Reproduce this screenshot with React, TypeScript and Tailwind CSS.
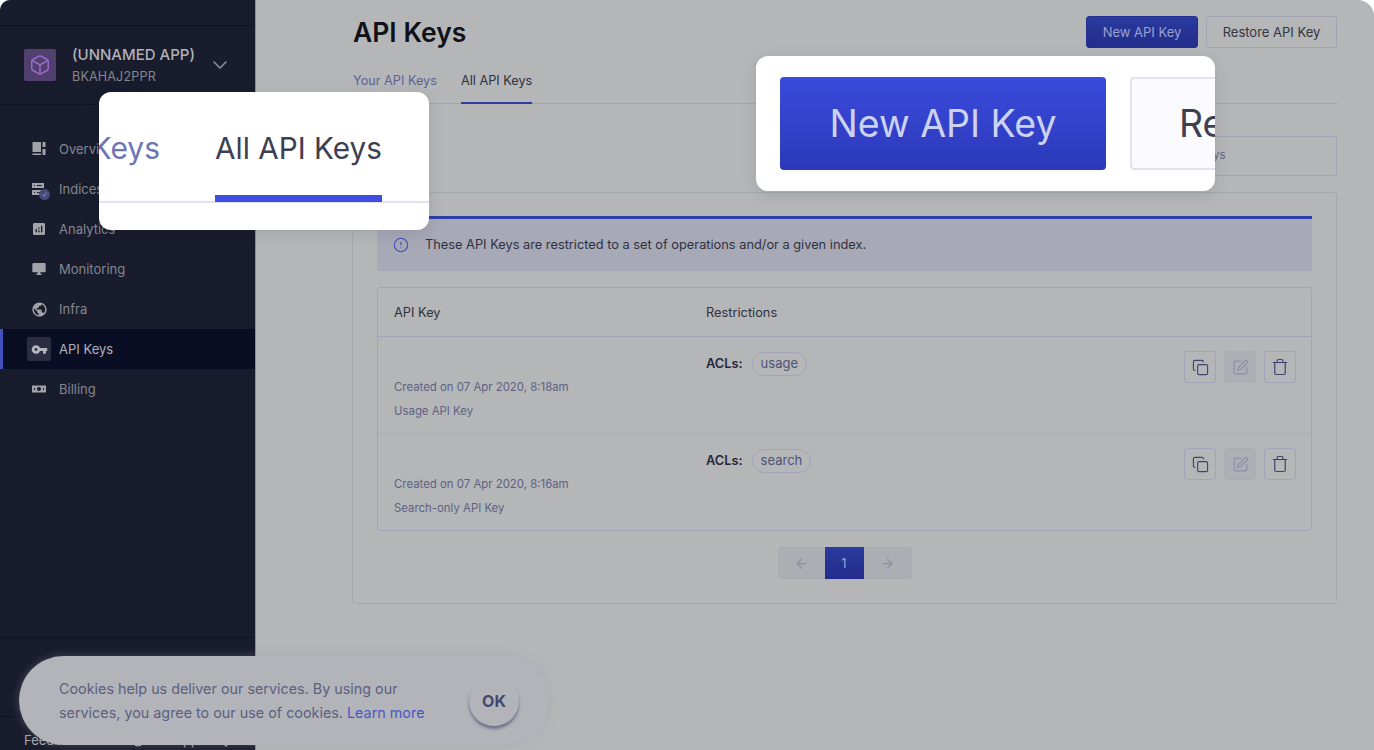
import React from "react";
import { MdAnalytics, MdDesktopWindows, MdPublic, MdVpnKey } from "react-icons/md";
import { Box, ChevronDown, CircleAlert, Copy, SquarePen, Trash, ArrowLeft, ArrowRight, CircleHelp, Bell } from "lucide-react";

const OverviewIcon = () => (
  <svg width="16" height="16" viewBox="0 0 16 16" fill="currentColor">
    <rect x="1.5" y="1" width="8.5" height="10" />
    <rect x="1.5" y="12.5" width="8.5" height="1.5" />
    <rect x="11.5" y="1" width="3" height="5" />
    <rect x="11.5" y="8" width="3" height="6" />
  </svg>
);
const IndicesIcon = () => (
  <span className="relative flex">
    <svg width="16" height="16" viewBox="0 0 16 16" fill="currentColor">
      <path fillRule="evenodd" d="M1 2h12v5H1zM3 4v1h1V4zM6 4v1h5V4zM1 9h12v5H1zM3 11v1h1v-1zM6 11v1h5v-1z" />
    </svg>
    <span className="absolute left-[8px] top-[8px] w-[11px] h-[11px] rounded-full bg-[#454c79] flex items-center justify-center">
      <svg width="7" height="7" viewBox="0 0 8 8" fill="none" stroke="#9ea0b8" strokeWidth="1"><path d="M1.5 4l2 2 3-4" /></svg>
    </span>
  </span>
);
const BillIcon = () => (
  <svg width="16" height="16" viewBox="0 0 16 16" fill="currentColor">
    <path fillRule="evenodd" d="M1 4.5h14v7H1zM8 6a2 2 0 100 4 2 2 0 000-4zM3 7v2h1V7zM12 7v2h1V7z" />
  </svg>
);

const nav: { label: string; icon: React.ReactNode; active?: boolean }[] = [
  { label: "Overview", icon: <OverviewIcon /> },
  { label: "Indices", icon: <IndicesIcon /> },
  { label: "Analytics", icon: <MdAnalytics size={16} /> },
  { label: "Monitoring", icon: <MdDesktopWindows size={16} /> },
  { label: "Infra", icon: <MdPublic size={17} /> },
  { label: "API Keys", icon: <MdVpnKey size={17} />, active: true },
  { label: "Billing", icon: <BillIcon /> },
];

function Sidebar() {
  return (
    <aside className="w-[256px] shrink-0 h-[750px] bg-[#191c2d] flex flex-col border-r border-[#8b8c90]">
      <div className="h-[26px] shrink-0 border-b border-[#0f1222]" />
      <div className="h-[79px] shrink-0 border-b border-[#0f1222] flex items-center pl-[24px]">
        <div className="w-[32px] h-[32px] rounded-[2px] bg-[#51406f] flex items-center justify-center text-[#9a6cc9]">
          <Box size={22} strokeWidth={1.6} />
        </div>
        <div className="ml-[16px] w-[136px] pt-[4px]">
          <div className="text-[15px] leading-[20px] font-medium text-[#b0b1b8] whitespace-nowrap">(UNNAMED APP)</div>
          <div className="text-[12.5px] leading-[24px] text-[#85878f] tracking-[0.2px]">BKAHAJ2PPR</div>
        </div>
        <ChevronDown size={24} strokeWidth={1.6} className="text-[#8d8f98]" />
      </div>
      <nav className="pt-[24px] flex-1">
        {nav.map((n) => (
          <div
            key={n.label}
            className={`h-[40px] flex items-center text-[13px] ${n.active ? "bg-[#0a0e25] text-[#b0b1b8] border-l-[3px] border-[#4450bd] pl-[24px]" : "text-[#85878f] pl-[27px]"}`}
          >
            <span className={`w-[24px] h-[24px] flex items-center justify-center rounded-[2px] ${n.active ? "bg-[#2a2d42] text-[#b5b6bc]" : "text-[#a2a3a9]"}`}>
              {n.icon}
            </span>
            <span className="ml-[8px] pt-[1px]">{n.label}</span>
          </div>
        ))}
      </nav>
      <div className="h-[79px] shrink-0 border-t border-[#0f1222]" />
      <div className="h-[34px] shrink-0 border-t border-[#0f1222] pl-[24px] pt-[13px] flex items-center text-[13px] leading-[16px] text-[#a8a9ae] overflow-hidden">
        <span className="w-[107px]">Feedback</span>
        <CircleHelp size={14} className="shrink-0" />
        <span className="ml-[22px] w-[52px]">Support</span>
        <Bell size={14} className="shrink-0" />
      </div>
    </aside>
  );
}

function Row({ date, name, acl }: { date: string; name: string; acl: string }) {
  const btn = "w-[32px] h-[32px] rounded-[3px] flex items-center justify-center";
  return (
    <div className="h-[96px] shrink-0 flex pl-[16px] pr-[15px] pt-[15px]">
      <div className="w-[312px] pt-[27px] text-[11.4px] text-[#5e6284]">
        <div className="leading-[16px]">{date}</div>
        <div className="leading-[16px] mt-[8px]">{name}</div>
      </div>
      <div className="flex-1 flex items-start">
        <span className="text-[12.8px] leading-[22px] font-semibold text-[#26283a] pt-[1px]">ACLs:</span>
        <span className="ml-[9px] h-[24px] px-[8px] rounded-full border border-[#a1a3b8] flex items-center text-[13px] text-[#4f5378]">{acl}</span>
      </div>
      <div className="flex gap-[8px] -mt-[1px]">
        <span className={`${btn} border border-[#a1a3b8] text-[#3f4470]`}><Copy size={17} strokeWidth={1.6} /></span>
        <span className={`${btn} bg-[#aeafb4] border border-[#acadb3] text-[#8c8ea6]`}><SquarePen size={17} strokeWidth={1.6} /></span>
        <span className={`${btn} border border-[#a1a3b8] text-[#3f4470]`}><Trash size={18} strokeWidth={1.6} /></span>
      </div>
    </div>
  );
}

function Main() {
  return (
    <main className="flex-1 pl-[97px] pr-[37px] min-w-0">
      <div className="flex items-start justify-between pt-[16px]">
        <h1 className="text-[26.5px] leading-[32px] font-semibold text-[#111219]">API Keys</h1>
        <div className="flex gap-[8px]">
          <span className="h-[32px] w-[112px] rounded-[3px] bg-gradient-to-b from-[#2a3a9e] to-[#222c8b] border border-[#24308f] flex items-center justify-center text-[13px] text-[#9aa2d0] pt-[1px]">New API Key</span>
          <span className="h-[32px] w-[131px] rounded-[3px] border border-[#a0a2b2] flex items-center justify-center text-[13px] text-[#33353f] pt-[1px]">Restore API Key</span>
        </div>
      </div>
      <div className="mt-[16px] h-[40px] border-b border-[#a2a3b5] flex text-[12.7px]">
        <span className="h-[40px] leading-[34px] text-[#5c6393]">Your API Keys</span>
        <span className="ml-[24px] h-[40px] leading-[34px] text-[#2f3140] border-b-[2px] border-[#2e3ca6]">All API Keys</span>
      </div>
      <div className="mt-[32px] h-[40px] flex justify-end">
        <div className="w-[260px] h-[40px] rounded-[3px] border border-[#a1a3b8] flex items-center pl-[59px] text-[11.4px] text-[#5e6284]">Search API Keys</div>
      </div>
      <div className="mt-[16px] h-[412px] -ml-[1px] rounded-[3px] border border-[#a7a8ae] px-[24px] pt-[23px]">
        <div className="h-[55px] border-t-[3px] border-[#2f3da8] bg-[#a8a9b7] flex items-center pl-[16px] text-[12.8px] text-[#2f3140]">
          <CircleAlert size={16} className="text-[#3f4bb5]" strokeWidth={1.6} />
          <span className="ml-[16px]">These API Keys are restricted to a set of operations and/or a given index.</span>
        </div>
        <div className="mt-[16px] rounded-[3px] border border-[#a1a3b8] h-[244px] flex flex-col">
          <div className="h-[49px] shrink-0 border-b border-[#a1a3b8] flex items-center pl-[16px] pt-[1px] text-[12.8px] text-[#2f3140]">
            <span className="w-[312px]">API Key</span>
            <span>Restrictions</span>
          </div>
          <Row date="Created on 07 Apr 2020, 8:18am" name="Usage API Key" acl="usage" />
          <div className="border-t border-[#acadb3]" />
          <Row date="Created on 07 Apr 2020, 8:16am" name="Search-only API Key" acl="search" />
        </div>
        <div className="mt-[16px] flex justify-center">
          <div className="h-[32px] flex rounded-[3px] bg-[#adaeb4] border border-[#aaabb2]">
            <span className="w-[46px] flex items-center justify-center text-[#8c8ea6]"><ArrowLeft size={15} /></span>
            <span className="w-[39px] -my-[1px] pt-[1px] bg-gradient-to-b from-[#2a3a9e] to-[#222c8b] flex items-center justify-center text-[13px] text-[#9aa2d0]">1</span>
            <span className="w-[47px] flex items-center justify-center text-[#8c8ea6]"><ArrowRight size={15} /></span>
          </div>
        </div>
      </div>
    </main>
  );
}

export default function App() {
  return (
    <div className="relative w-[1374px] h-[750px] overflow-hidden bg-white" style={{ fontFamily: "Inter, 'Liberation Sans', sans-serif" }}>
      <div className="flex h-[750px] bg-[#b5b6b8] rounded-tl-[10px] rounded-tr-[16px] overflow-hidden">
        <Sidebar />
        <Main />
      </div>

      {/* Zoom popup: tab */}
      <div className="absolute left-[99px] top-[92px] w-[330px] h-[138px] rounded-[12px] bg-white overflow-hidden shadow-[0_4px_16px_rgba(0,0,0,0.1)]">
        <div className="h-[111px] border-b-[2px] border-[#e2e2f0] relative">
          <span className="absolute right-[269px] top-[36px] text-[30px] leading-[40px] whitespace-nowrap text-[#6d75b5]">Your API Keys</span>
          <span className="absolute left-[116px] top-[36px] h-[74px] text-[29.7px] leading-[40px] whitespace-nowrap text-[#3d4052] border-b-[7px] border-[#3f4de0]">All API Keys</span>
        </div>
      </div>

      {/* Zoom popup: buttons */}
      <div className="absolute left-[756px] top-[56px] w-[459px] h-[135px] rounded-[12px] bg-white overflow-hidden shadow-[0_4px_16px_rgba(0,0,0,0.1)] flex items-center pl-[24px]">
        <span className="w-[326px] h-[93px] shrink-0 pt-[2px] rounded-[4px] bg-gradient-to-b from-[#3a4bdc] to-[#2b39b8] flex items-center justify-center text-[37.5px] text-[#cdd2f2]">New API Key</span>
        <span className="ml-[24px] w-[200px] h-[93px] shrink-0 pt-[2px] rounded-[4px] border-[2px] border-[#e2e2f0] bg-[#fbfbfd] pl-[47px] flex items-center text-[37.5px] text-[#3d4052]">Restore</span>
      </div>

      {/* Cookies */}
      <div className="absolute left-[19px] top-[656px] w-[530px] h-[89px] rounded-full bg-[#b3b4b9] shadow-[0_0_10px_rgba(150,152,170,0.35)] flex items-center pl-[40px]">
        <p className="w-[385px] shrink-0 text-[14.35px] leading-[24px] text-[#5c5f80]">
          Cookies help us deliver our services. By using our<br />services, you agree to our use of cookies. <span className="text-[#4a55c4]">Learn more</span>
        </p>
        <span className="ml-[25px] w-[50px] h-[50px] rounded-full bg-[#b3b4b9] shadow-[0_3px_3px_rgba(70,72,110,0.6)] flex items-center justify-center text-[16px] font-bold text-[#44476f]">OK</span>
      </div>
    </div>
  );
}
